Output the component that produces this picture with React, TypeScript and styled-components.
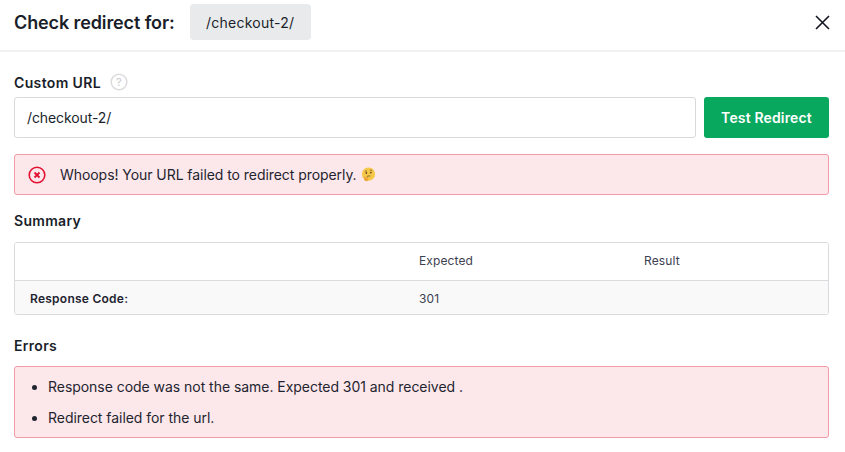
import styled, { createGlobalStyle } from "styled-components";

const GlobalStyle = createGlobalStyle`
  html, body {
    margin: 0;
    padding: 0;
    background: #fff;
  }
  body {
    font-family: Inter, "Liberation Sans", sans-serif;
    color: #1a1f2b;
    overflow: hidden;
  }
  * {
    box-sizing: border-box;
  }
`;

const Modal = styled.div`
  width: 845px;
  height: 452px;
  background: #fff;
`;

const Header = styled.header`
  height: 52px;
  display: flex;
  align-items: flex-start;
  padding: 4px 15px 0 14px;
  border-bottom: 2px solid #f1f1f2;
`;

const Title = styled.h2`
  margin: 0 15px 0 0;
  height: 36px;
  line-height: 37px;
  font-size: 18px;
  font-weight: 600;
  letter-spacing: -0.11px;
  color: #191e2a;
`;

const UrlBadge = styled.span`
  width: 121px;
  height: 36px;
  display: flex;
  align-items: center;
  justify-content: center;
  background: #e9eaec;
  border-radius: 4px;
  font-size: 14px;
  letter-spacing: 0.25px;
  color: #1a1f2b;
`;

const CloseButton = styled.button`
  margin: 11px 0 0 auto;
  padding: 0;
  width: 15px;
  height: 15px;
  border: 0;
  background: none;
  display: block;
  color: #14171f;
`;

const Body = styled.main`
  padding: 21px 16px 0 14px;
`;

const FieldLabel = styled.div`
  display: flex;
  align-items: center;
  gap: 9px;
  height: 18px;
  margin-bottom: 6px;
  font-size: 14px;
  font-weight: 600;
  letter-spacing: 0.35px;
  color: #191e2a;
`;

const HelpIcon = styled.svg`
  width: 18px;
  height: 18px;
  display: block;
`;

const UrlRow = styled.div`
  display: flex;
  gap: 8px;
  margin-bottom: 16px;
`;

const UrlInput = styled.input`
  flex: 1;
  min-width: 0;
  height: 41px;
  padding: 0 12px;
  border: 1px solid #d8d9dc;
  border-radius: 3px;
  font: 400 14px Inter, "Liberation Sans", sans-serif;
  letter-spacing: -0.1px;
  color: #1a1f2b;
  outline: none;
`;

const TestButton = styled.button`
  width: 125px;
  height: 41px;
  border: 0;
  border-radius: 3px;
  background: #09a85f;
  color: #fff;
  font: 600 14px Inter, "Liberation Sans", sans-serif;
  letter-spacing: 0.15px;
`;

const Alert = styled.div`
  display: flex;
  align-items: center;
  gap: 14px;
  height: 41px;
  padding: 0 13px;
  background: #fce8ea;
  border: 1px solid #f29aa6;
  border-radius: 3px;
  font-size: 14px;
  letter-spacing: -0.06px;
  color: #1f2430;
`;

const EmojiIcon = styled.svg`
  width: 15px;
  height: 15px;
  margin-left: -10px;
  display: block;
`;

const SectionTitle = styled.h3<{ $top: number; $bottom: number }>`
  margin: ${(p) => p.$top}px 0 ${(p) => p.$bottom}px;
  height: 18px;
  line-height: 18px;
  font-size: 14px;
  font-weight: 600;
  letter-spacing: 0.3px;
  color: #191e2a;
`;

const SummaryTable = styled.div`
  border: 1px solid #d9dbdf;
  border-radius: 3px;
  overflow: hidden;
`;

const SummaryRow = styled.div<{ $head?: boolean }>`
  display: grid;
  grid-template-columns: 404px 225px 1fr;
  align-items: center;
  height: ${(p) => (p.$head ? 38 : 33)}px;
  padding: ${(p) => (p.$head ? "0 0 2px" : "1px 0 0")};
  background: ${(p) => (p.$head ? "#fff" : "#f9f9fa")};
  border-bottom: ${(p) => (p.$head ? "1px solid #d9dbdf" : "none")};
`;

const Cell = styled.div`
  font-size: 12px;
  letter-spacing: 0.12px;
  color: #3c4150;
`;

const RowName = styled(Cell)`
  padding-left: 15px;
  font-weight: 600;
  letter-spacing: 0.25px;
  color: #1f2430;
`;

const ErrorBox = styled.ul`
  margin: 0;
  height: 72px;
  padding: 1px 0 0 33px;
  display: flex;
  flex-direction: column;
  justify-content: center;
  gap: 13px;
  background: #fce8ea;
  border: 1px solid #f29aa6;
  border-radius: 3px;
  font-size: 14px;
  line-height: 18px;
  letter-spacing: -0.04px;
  color: #1f2430;
`;

export default function App() {
  return (
    <Modal>
      <GlobalStyle />
      <Header>
        <Title>Check redirect for:</Title>
        <UrlBadge>/checkout-2/</UrlBadge>
        <CloseButton aria-label="Close">
          <svg width="15" height="15" viewBox="0 0 15 15" fill="none" stroke="currentColor" strokeWidth="1.6">
            <path d="M1 1l13 13M14 1L1 14" />
          </svg>
        </CloseButton>
      </Header>
      <Body>
        <FieldLabel>
          Custom URL
          <HelpIcon viewBox="0 0 18 18" fill="none">
            <circle cx="9" cy="9" r="7.8" stroke="#dcdcde" strokeWidth="1.5" />
            <text x="9" y="13" textAnchor="middle" fontSize="11" fontWeight="500" letterSpacing="0" fill="#cfd0d3">?</text>
          </HelpIcon>
        </FieldLabel>
        <UrlRow>
          <UrlInput defaultValue="/checkout-2/" />
          <TestButton>Test Redirect</TestButton>
        </UrlRow>
        <Alert>
          <svg width="18" height="18" viewBox="0 0 18 18" fill="none" stroke="#e3102f" strokeWidth="1.6">
            <circle cx="9" cy="9" r="7.8" />
            <path d="M6.500 6.500l5 5M11.500 6.500l-5 5" strokeWidth="1.8" />
          </svg>
          Whoops! Your URL failed to redirect properly.
          <EmojiIcon viewBox="0 0 14 14">
            <circle cx="7" cy="6.600" r="6.200" fill="#f6c84a" />
            <path d="M3.600 4.200q1-1 2-.5M8.200 3q1.300-.5 2.300.5" stroke="#7a5520" strokeWidth=".7" fill="none" />
            <circle cx="5" cy="5.500" r=".8" fill="#5a3d1a" />
            <circle cx="9.200" cy="5.200" r=".8" fill="#5a3d1a" />
            <path d="M5.500 8.800q1.800-.8 3.300-.3" stroke="#7a5520" strokeWidth=".8" fill="none" />
            <path d="M2.800 9.200q2.700-.4 4 .6q.5 2-1 3.500q-2.600.3-3-1.600z" fill="#eda83c" />
          </EmojiIcon>
        </Alert>
        <SectionTitle $top={17} $bottom={12}>Summary</SectionTitle>
        <SummaryTable>
          <SummaryRow $head>
            <Cell />
            <Cell>Expected</Cell>
            <Cell>Result</Cell>
          </SummaryRow>
          <SummaryRow>
            <RowName>Response Code:</RowName>
            <Cell>301</Cell>
            <Cell />
          </SummaryRow>
        </SummaryTable>
        <SectionTitle $top={22} $bottom={11}>Errors</SectionTitle>
        <ErrorBox>
          <li>Response code was not the same. Expected 301 and received .</li>
          <li>Redirect failed for the url.</li>
        </ErrorBox>
      </Body>
    </Modal>
  );
}
